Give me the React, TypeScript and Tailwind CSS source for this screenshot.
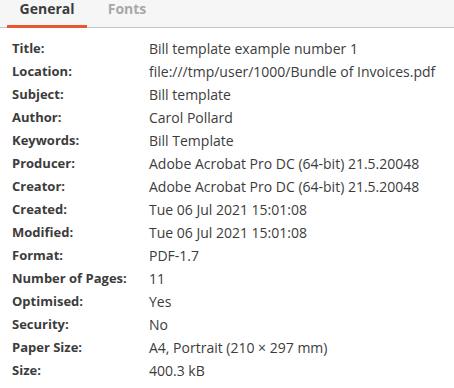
import React from 'react';

const rows: [string, string][] = [
  ['Title:', 'Bill template example number 1'],
  ['Location:', 'file:///tmp/user/1000/Bundle of Invoices.pdf'],
  ['Subject:', 'Bill template'],
  ['Author:', 'Carol Pollard'],
  ['Keywords:', 'Bill Template'],
  ['Producer:', 'Adobe Acrobat Pro DC (64-bit) 21.5.20048'],
  ['Creator:', 'Adobe Acrobat Pro DC (64-bit) 21.5.20048'],
  ['Created:', 'Tue 06 Jul 2021 15:01:08'],
  ['Modified:', 'Tue 06 Jul 2021 15:01:08'],
  ['Format:', 'PDF-1.7'],
  ['Number of Pages:', '11'],
  ['Optimised:', 'Yes'],
  ['Security:', 'No'],
  ['Paper Size:', 'A4, Portrait (210 × 297 mm)'],
  ['Size:', '400.3 kB'],
];

function App() {
  return (
    <div className="w-[454px] h-[388px] bg-white overflow-hidden font-['Open_Sans',sans-serif] text-[#3c3c3c]">
      <div className="flex h-[28px] bg-[#f6f6f6] border-b border-[#c4c4c4] pl-[7px]">
        <div className="w-[80px] flex justify-center leading-[18px] border-b-[3px] border-[#e05a2b] -mb-px text-[14px] font-bold text-[#3c3c3c]">
          General
        </div>
        <div className="w-[80px] flex justify-center leading-[18px] text-[14px] font-bold text-[#a8a8a8]">
          Fonts
        </div>
      </div>
      <div className="flex flex-col pt-[9px] pl-[12px]">
        {rows.map(([label, value]) => (
          <div key={label} className="flex h-[23px] items-center">
            <div className="w-[137px] text-[13px] font-bold">{label}</div>
            <div className="text-[14px]">{value}</div>
          </div>
        ))}
      </div>
    </div>
  );
}

export default App;
